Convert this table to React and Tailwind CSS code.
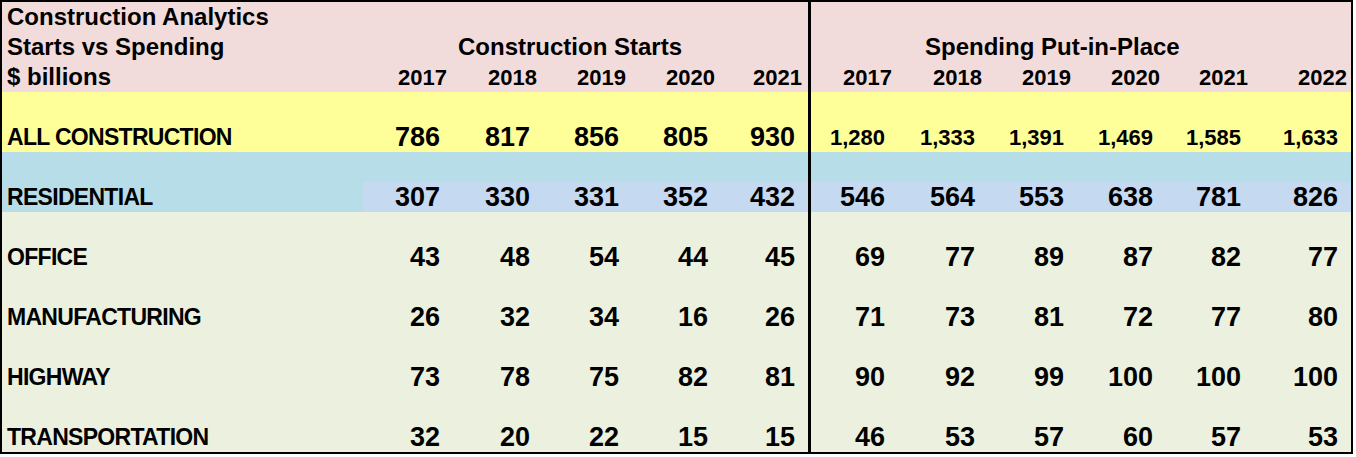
import React from "react";

const SW = ["w-[90px]", "w-[90px]", "w-[89px]", "w-[89px]", "w-[87px]"];
const PW = ["w-[87px]", "w-[90px]", "w-[89px]", "w-[89px]", "w-[88px]", "w-[97px]"];

const startYears = ["2017", "2018", "2019", "2020", "2021"];
const spendYears = ["2017", "2018", "2019", "2020", "2021", "2022"];

const rows = [
  { label: "OFFICE", s: ["43", "48", "54", "44", "45"], p: ["69", "77", "89", "87", "82", "77"] },
  { label: "MANUFACTURING", s: ["26", "32", "34", "16", "26"], p: ["71", "73", "81", "72", "77", "80"] },
  { label: "HIGHWAY", s: ["73", "78", "75", "82", "81"], p: ["90", "92", "99", "100", "100", "100"] },
  { label: "TRANSPORTATION", s: ["32", "20", "22", "15", "15"], p: ["46", "53", "57", "60", "57", "53"] },
];

function Divider() {
  return <div className="w-[3px] shrink-0 self-stretch bg-black" />;
}

function DataRow({ label, s, p, rowBg, cellBg, spendSize }) {
  return (
    <div className={`flex h-[60px] ${rowBg}`}>
      <div className="w-[361px] shrink-0 flex items-end">
        <div className="h-[30px] flex items-center pl-[5px] text-[23px] font-bold tracking-[-0.7px]">{label}</div>
      </div>
      {s.map((v, i) => (
        <div key={i} className={`${SW[i]} shrink-0 flex items-end`}>
          <div className={`h-[30px] w-full flex items-center justify-end pr-[13px] text-[27px] font-bold ${cellBg}`}>{v}</div>
        </div>
      ))}
      <Divider />
      {p.map((v, i) => (
        <div key={i} className={`${PW[i]} shrink-0 flex items-end`}>
          <div className={`h-[30px] w-full flex items-center justify-end pr-[13px] ${spendSize} font-bold ${cellBg}`}>{v}</div>
        </div>
      ))}
    </div>
  );
}

export default function App() {
  return (
    <div className="w-[1356px] h-[457px] bg-white font-['Liberation_Sans',Arial,sans-serif] text-black overflow-hidden">
      <div className="w-[1353px] border-2 border-black">
        <div className="flex h-[90px] bg-[#f2dcdb]">
          <div className="w-[361px] shrink-0 flex flex-col text-[24px] font-bold leading-none">
            <div className="h-[30px] flex items-center pl-[5px]">Construction Analytics</div>
            <div className="h-[30px] flex items-center pl-[5px]">Starts vs Spending</div>
            <div className="h-[30px] flex items-center pl-[5px]">$ billions</div>
          </div>
          <div className="flex flex-col">
            <div className="h-[30px]" />
            <div className="h-[30px] flex items-center pl-[95px] text-[24px] font-bold">Construction Starts</div>
            <div className="h-[30px] flex">
              {startYears.map((y, i) => (
                <div key={i} className={`${SW[i]} shrink-0 flex items-center justify-end pr-[6px] text-[22px] font-bold`}>{y}</div>
              ))}
            </div>
          </div>
          <Divider />
          <div className="flex flex-col">
            <div className="h-[30px]" />
            <div className="h-[30px] flex items-center pl-[114px] text-[24px] font-bold">Spending Put-in-Place</div>
            <div className="h-[30px] flex">
              {spendYears.map((y, i) => (
                <div key={i} className={`${PW[i]} shrink-0 flex items-center justify-end ${i === 5 ? "pr-[4px]" : "pr-[6px]"} text-[22px] font-bold`}>{y}</div>
              ))}
            </div>
          </div>
        </div>

        <DataRow
          label="ALL CONSTRUCTION"
          s={["786", "817", "856", "805", "930"]}
          p={["1,280", "1,333", "1,391", "1,469", "1,585", "1,633"]}
          rowBg="bg-[#ffff99]"
          cellBg=""
          spendSize="text-[22px]"
        />
        <DataRow
          label="RESIDENTIAL"
          s={["307", "330", "331", "352", "432"]}
          p={["546", "564", "553", "638", "781", "826"]}
          rowBg="bg-[#b7dee8]"
          cellBg="bg-[#c5d9f1]"
          spendSize="text-[27px]"
        />
        {rows.map((r) => (
          <DataRow
            key={r.label}
            label={r.label}
            s={r.s}
            p={r.p}
            rowBg="bg-[#ebf1de]"
            cellBg=""
            spendSize="text-[27px]"
          />
        ))}
      </div>
    </div>
  );
}
